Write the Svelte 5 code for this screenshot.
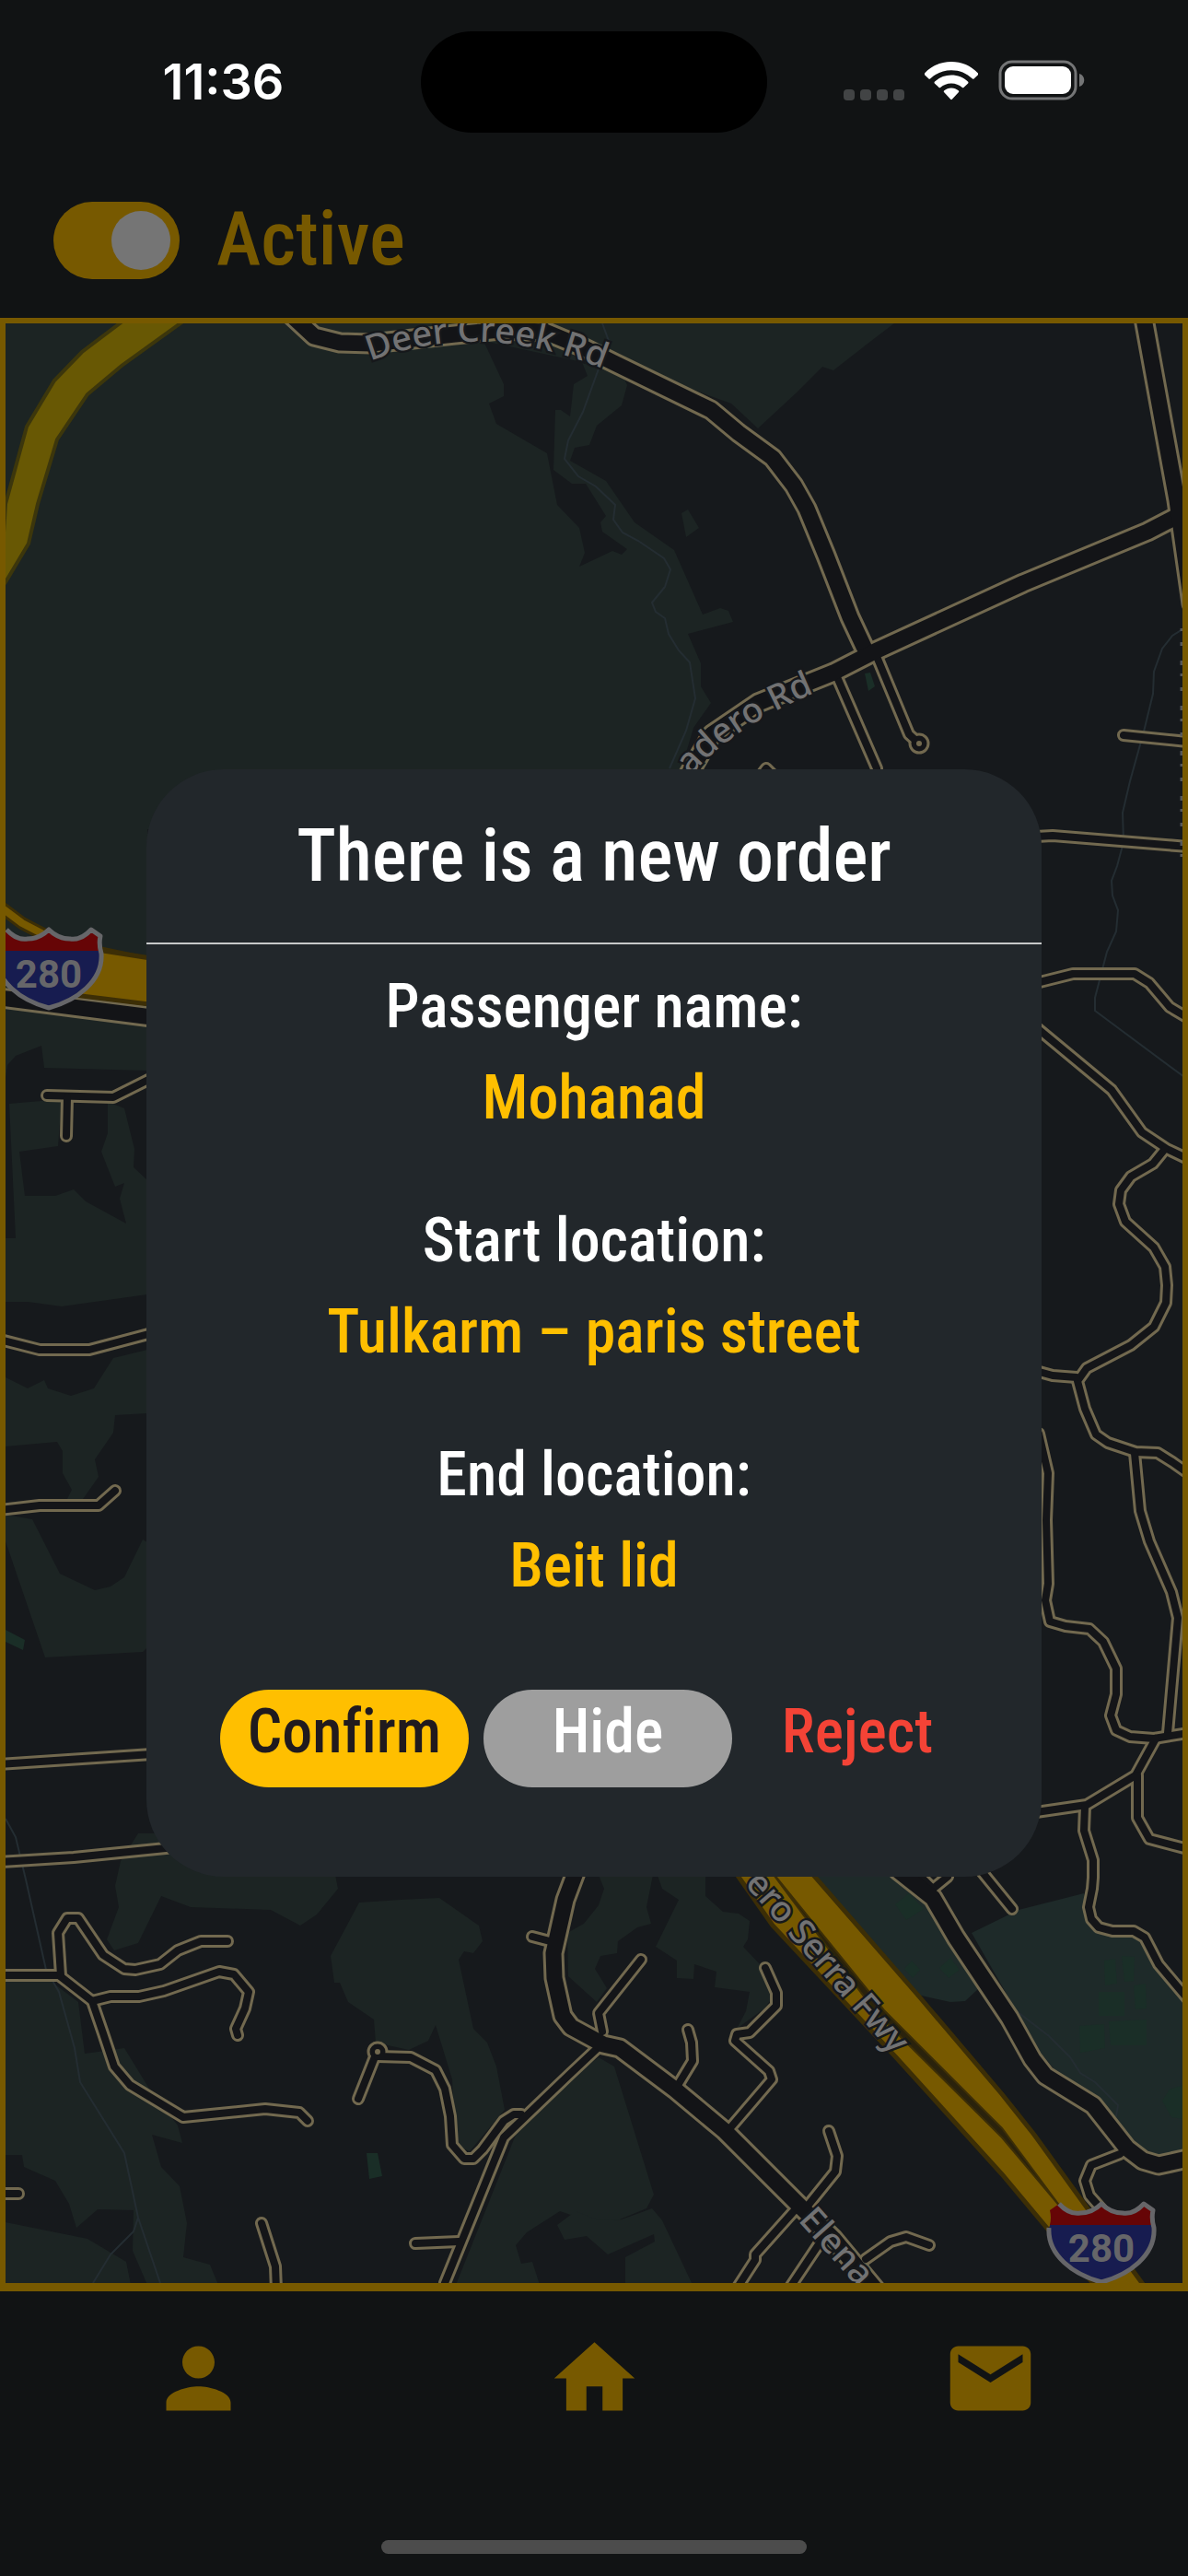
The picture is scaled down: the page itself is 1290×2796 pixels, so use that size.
<script>
  let active = $state(true);

  const details = [
    { label: 'Passenger name:', value: 'Mohanad' },
    { label: 'Start location:', value: 'Tulkarm – paris street' },
    { label: 'End location:', value: 'Beit lid' }
  ];

  const woods = [
    '6,351 971,351 946,370 905,402 893,398 864,427 823,465 794,438 670,393 681,418 675,440 648,462 640,483 624,486 619,500 658,522 689,567 732,597 763,667 782,660 791,663 796,675 747,688 761,720 761,745 772,763 753,790 740,834 740,900 160,900 160,1788 155,1793 49,1799 6,1673',
    '747,553 759,573 745,583 740,557',
    '131,2020 125,2047 129,2070 116,2105 124,2117 150,2109 175,2058 207,2070 294,2073 326,2090 344,2078 367,2050 363,2030 300,1990 150,1990',
    '390,2065 435,2062 477,2060 520,2090 524,2107 514,2120 504,2118 498,2127 514,2202 529,2217 539,2243 548,2290 510,2335 494,2328 491,2257 473,2198 465,2215 444,2225 408,2217 406,2192 378,2173 369,2152 363,2152 359,2123',
    '6,2151 56,2151 85,2173 92,2229 135,2223 162,2267 193,2307 198,2326 165,2317 175,2352 195,2373 203,2413 199,2450 228,2458 237,2480 160,2480 144,2443 145,2399 106,2398 83,2418 75,2392 60,2367 26,2352 24,2339 6,2339',
    '6,2412 95,2430 137,2455 142,2480 6,2480',
    '650,2233 667,2243 710,2382 702,2397 673,2409 646,2413 608,2400 572,2423 560,2437 566,2457 578,2455 586,2480 495,2480 560,2317 640,2240',
    '605,2415 613,2431 637,2427 660,2447 710,2425 711,2433 679,2450 679,2480 752,2480 719,2410 708,2397 675,2409 650,2410 625,2400',
    '648,2030 710,2030 702,2070 707,2088 692,2092 671,2107 670,2120 652,2123 646,2137 659,2158 648,2173 617,2145 616,2098 634,2088 650,2068 656,2050',
    '712,2030 719,2050 737,2062 712,2113 735,2128 735,2147 753,2148 754,2132 778,2140 776,2157 814,2162 810,2183 800,2202 830,2180 845,2160 826,2133 807,2113 812,2105 814,2085 802,2077 785,2075 766,2058 766,2030'
  ];

  const clearings = [
    '525,370 547,417 547,430 531,438 539,460 594,492 605,548 629,573 635,600 629,615 665,598 675,602 681,596 654,577 652,567 658,560 636,525 621,525 601,510 603,445 609,445 619,452 623,417 638,408 632,393',
    '8,1156 17,1146 45,1135 48,1159 160,1162 160,1281 145,1267 146,1247 135,1203 117,1196 117,1230 110,1250 125,1288 135,1284 130,1301 137,1328 93,1304 80,1291 60,1298 27,1298 21,1250 63,1244 67,1193 10,1198 17,1344 6,1344 6,1170',
    '6,1413 30,1413 67,1418 160,1405 160,1465 123,1474 102,1507 77,1515 52,1507 48,1498 30,1507 6,1495',
    '6,1570 62,1565 68,1575 68,1599 78,1617 72,1629 90,1627 107,1603 103,1584 123,1555 125,1536 160,1534 160,1674 155,1671 135,1712 120,1722 103,1726 65,1708 35,1649 6,1644'
  ];

  const parks = [
    '860,2010 960,2010 1005,2063 1063,2158 1048,2172 1032,2173 996,2165 951,2117',
    '1055,2098 1106,2073 1177,2055 1183,2087 1208,2098 1233,2098 1258,2140 1284,2173 1284,2333 1258,2340 1231,2327 1195,2278 1144,2245 1129,2227'
  ];

  const buildings = [
    '939,731 945,730 950,745 943,750',
    '6,1769 27,1780 25,1791 6,1782',
    '398,2337 410,2337 415,2362 401,2365',
    '987,2055 1003,2072 984,2084 972,2067',
    '990,2128 999,2138 991,2147 982,2137',
    '1032,2125 1042,2138 1030,2147 1020,2136',
    '1199,2128 1211,2126 1213,2153 1200,2155',
    '1218,2123 1232,2124 1231,2150 1221,2151',
    '1231,2155 1244,2153 1245,2180 1233,2181',
    '1193,2162 1221,2162 1221,2188 1193,2188',
    '1172,2199 1199,2197 1200,2223 1173,2228',
    '1204,2194 1245,2192 1245,2220 1206,2220',
    '1262,2280 1270,2268 1284,2263 1284,2300 1272,2298'
  ];

  const streams = [
    '654,351 661,370 633,447 617,478 613,498 628,517 647,528 668,548 666,564 676,578 693,587 721,606 728,618 722,637 708,654 712,664 722,671 726,688 737,706 749,719 755,758 745,793 727,834',
    '1284,683 1273,690 1262,704 1253,729 1252,753 1242,794 1227,848 1219,882 1220,914 1213,940 1207,956 1208,972 1214,988 1212,1011 1202,1033 1189,1083 1189,1097 1290,1172',
    '6,1974 17,1994 28,2040 50,2138 64,2162 81,2223 87,2260 135,2337 150,2407 174,2478',
    '150,2407 145,2422 120,2447 101,2478',
    '1104,2183 1139,2210 1162,2233 1173,2250 1189,2260 1214,2285 1212,2297'
  ];

  const streets = [
    '909,735 952,834',
    '953,715 987,797 998,807',
    '1220,798 1290,805',
    '1125,908 1143,907 1290,919',
    '1125,1067 1165,1057 1232,1057 1248,1067 1270,1093 1290,1105',
    '1125,1115 1207,1183 1240,1229 1267,1247 1290,1258',
    '1265,1247 1252,1263 1228,1277 1217,1292 1215,1307 1222,1326 1253,1354 1265,1375 1267,1395 1266,1414 1253,1440 1228,1460 1180,1485 1170,1499 1178,1529 1190,1557 1203,1566 1233,1576 1257,1577 1273,1587 1290,1599',
    '1125,1488 1143,1493 1169,1495',
    '1232,1577 1238,1640 1248,1673 1272,1728 1279,1756 1268,1881',
    '1128,1556 1138,1599 1136,1650 1138,1719 1135,1737 1140,1760 1157,1765 1183,1768 1198,1782 1212,1811 1212,1839 1206,1862 1212,1878 1227,1885 1253,1887 1290,1881',
    '1255,1887 1233,1927 1180,1959 1125,1967',
    '1235,1927 1235,1973 1248,1996 1290,2007',
    '1178,1961 1177,1987 1187,2019 1187,2038 1186,2050 1182,2070 1185,2083 1193,2092 1208,2096 1231,2096 1243,2103 1258,2132 1290,2170',
    '51,1189 123,1191 135,1185 165,1170',
    '73,1191 72,1233',
    '0,1454 43,1465 97,1465 165,1447',
    '0,1639 43,1634 107,1634 125,1618',
    '0,1915 165,1904',
    '0,2021 80,2016 200,2004',
    '0,2144 64,2144 100,2172 112,2207 124,2243 141,2263 199,2298 288,2289 325,2293 334,2302',
    '66,2144 63,2098 73,2082 85,2082 112,2122 135,2137 147,2138 174,2132 193,2117 218,2107 247,2107',
    '100,2172 120,2167 151,2167 178,2161 238,2140 254,2143 270,2162 266,2180 256,2202 258,2209',
    '408,2230 389,2278',
    '410,2232 446,2233 473,2247 483,2267 489,2297 491,2328 504,2343 514,2343 524,2333 547,2302 558,2295 566,2295',
    '0,2381 20,2381',
    '284,2413 299,2460 300,2486',
    '451,2435 498,2433',
    '578,2102 597,2107',
    '652,2220 618,2252 547,2320 483,2478',
    '654,2205 650,2185 696,2127',
    '735,2265 752,2237 751,2217 747,2203',
    '791,2312 838,2257 835,2248 798,2215 800,2208 814,2206 843,2177 843,2163 831,2136',
    '878,2393 907,2357 909,2340 900,2313',
    '862,2400 820,2447 820,2453 800,2484',
    '893,2430 857,2484',
    '940,2452 967,2433 984,2428 1009,2437',
    '1060,2024 1099,2072',
    '1029,2037 1013,2050',
    '1000,2037 1013,2050',
    '1216,2338 1185,2350 1178,2367 1183,2383 1198,2400',
    '826,842 832,834 840,842'
  ];

  const avenues = [
    '314,340 341,365 369,372 403,373 494,363 543,358 592,360 633,377 665,393 772,445 802,470 839,497 862,527 876,552 897,603 923,670 938,702',
    '1290,550 1275,562 1246,577 1111,633 950,707 905,730 823,763 773,797 745,845',
    '1241,340 1278,543 1294,655',
    '0,1083 165,1104',
    '626,2030 614,2062 601,2120 602,2147 611,2188 620,2200 655,2219 673,2223 733,2268 787,2313 866,2392 905,2430 950,2484',
    '975,2030 1013,2060 1038,2103 1096,2190 1121,2235 1135,2253 1187,2285 1224,2332 1241,2345 1258,2350 1290,2343'
  ];

  const circles = [[410, 2227], [998, 807]];
  const shields = [[53, 1007], [1196, 2390]];
</script>

<div class="phone">
  <div class="status">
    <span class="time">11:36</span>
    <span class="island"></span>
    <div class="indicators">
      <svg class="cell" viewBox="0 0 66 12" aria-hidden="true">
        <rect x="0" width="12" height="12" rx="4" /><rect x="18" width="12" height="12" rx="4" />
        <rect x="36" width="12" height="12" rx="4" /><rect x="54" width="12" height="12" rx="4" />
      </svg>
      <svg class="wifi" viewBox="0 0 58 42" aria-hidden="true">
        <path d="M29 0C18 0 8 4 0 12.500q-.5 1 0 1.700l4.500 4.400q.8.500 1.500 0C12.500 12.500 20 9.300 29 9.300s16.500 3.200 23 9.300q.8.500 1.500 0l4.500-4.400q.5-.8 0-1.700C50 4 40 0 29 0z" />
        <path d="M29 14.500c-7 0-13 2.500-18.200 7.200q-.6.900 0 1.700l4.800 4.600q.8.500 1.500 0c3.500-3 7.300-4.600 11.900-4.600s8.400 1.600 11.900 4.600q.8.500 1.500 0l4.800-4.600q.6-.9 0-1.700C42 17 36 14.500 29 14.500z" />
        <path d="M29 28.500c-3 0-5.500 1-8 3q-.6.800 0 1.600l7.200 7.700q.8.700 1.600 0l7.200-7.700q.6-.8 0-1.600c-2.500-2-5-3-8-3z" />
      </svg>
      <svg class="battery" viewBox="0 0 94 44" aria-hidden="true">
        <rect class="shell" x="2" y="2" width="82" height="40" rx="13" />
        <rect class="charge" x="7" y="7" width="72" height="30" rx="9" />
        <path class="nub" d="M88 15c7 2 7 12 0 14z" />
      </svg>
    </div>
  </div>

  <header>
    <label class="switch">
      <input type="checkbox" role="switch" bind:checked={active} />
      <span>Active</span>
    </label>
  </header>

  <main>
    <svg class="map" viewBox="6 351 1278 2127" preserveAspectRatio="xMidYMid slice" role="img" aria-label="Map">
      <defs>
        <path id="deer" d="M402 392Q535 340 690 416" />
        <path id="arastradero" d="M750 842Q800 784 900 746" />
      </defs>
      <rect class="ground" x="6" y="351" width="1278" height="2127" />
      {#each woods as points}<polygon class="wood" {points} />{/each}
      {#each clearings as points}<polygon class="ground" {points} />{/each}
      {#each parks as points}<polygon class="park" {points} />{/each}
      {#each buildings as points}<polygon class="building" {points} />{/each}
      {#each streams as points}<polyline class="stream" {points} />{/each}

      {#each streets as points}<polyline class="street edge" {points} />{/each}
      {#each avenues as points}<polyline class="avenue edge" {points} />{/each}
      {#each circles as [cx, cy]}<circle class="rim" {cx} {cy} r="10" />{/each}
      {#each streets as points}<polyline class="street" {points} />{/each}
      {#each avenues as points}<polyline class="avenue" {points} />{/each}
      {#each circles as [cx, cy]}<circle class="island-dot" {cx} {cy} r="3" />{/each}

      <polygon class="parkway" points="134,348 89,382 59,413 29,463 6,547 0,640 6,632 31,590 41,547 62,477 95,428 132,397 200,348" />
      <polyline class="ramp edge" points="0,984 24,1002 70,1026 165,1046" />
      <polyline class="ramp" points="0,984 24,1002 70,1026 165,1046" />
      <polygon class="freeway" points="56,1026 112,1032 170,1041 170,1091 80,1080" />
      <polygon class="freeway" points="790,2020 839,2090 972,2232 1088,2360 1190,2482 1243,2482 1183,2400 1123,2317 1088,2273 998,2167 870,2020" />
      <path class="median" d="M832 2024L960 2182 1088 2310 1152 2396 1088 2320 950 2183z" />

      <text class="road-name"><textPath href="#deer">Deer Creek Rd</textPath></text>
      <text class="road-name"><textPath href="#arastradero">adero Rd</textPath></text>
      <text class="road-name" text-anchor="end" transform="translate(970 2231) rotate(49)">ero Serra Fwy</text>
      <text class="road-name" transform="translate(866 2410) rotate(48)">Elena</text>
      <path class="side-name" d="M1284 682V934" />

      {#each shields as [x, y]}
        <g transform="translate({x} {y})">
          <path class="shield-blue" d="M-46 2Q-35 14-23 12-10 12 0 2 10 12 23 12 35 14 46 2L56 9Q54 18 57 28C59 58 30 79 0 87-30 79-59 58-57 28-54 18-56 9z" />
          <path class="shield-red" d="M-46 2Q-35 14-23 12-10 12 0 2 10 12 23 12 35 14 46 2L56 9Q54 17 56 25H-56Q-54 17-56 9z" />
          <path class="shield-line" d="M-46 2Q-35 14-23 12-10 12 0 2 10 12 23 12 35 14 46 2L56 9Q54 18 57 28C59 58 30 79 0 87-30 79-59 58-57 28-54 18-56 9zM-56 26H56" />
          <text class="route" text-anchor="middle" y="65">280</text>
        </g>
      {/each}
    </svg>
  </main>

  <nav>
    <button type="button" aria-label="Profile">
      <svg viewBox="0 0 24 24"><path d="M12 12c2.210 0 4-1.790 4-4s-1.790-4-4-4-4 1.790-4 4 1.790 4 4 4zm0 2c-2.670 0-8 1.340-8 4v2h16v-2c0-2.660-5.330-4-8-4z" /></svg>
    </button>
    <button type="button" aria-label="Home">
      <svg viewBox="0 0 24 24"><path d="M10 20v-6h4v6h5v-8h3L12 3 2 12h3v8z" /></svg>
    </button>
    <button type="button" aria-label="Messages">
      <svg viewBox="0 0 24 24"><path d="M20 4H4c-1.100 0-1.990.9-1.990 2L2 18c0 1.100.9 2 2 2h16c1.100 0 2-.9 2-2V6c0-1.100-.9-2-2-2zm0 4l-8 5-8-5V6l8 5 8-5v2z" /></svg>
    </button>
  </nav>
  <div class="home-bar"></div>

  <div class="overlay">
    <div class="dialog" role="dialog" aria-modal="true" aria-labelledby="order-title">
      <h1 id="order-title">There is a new order</h1>
      <dl>
        {#each details as item}
          <div class="detail">
            <dt>{item.label}</dt>
            <dd>{item.value}</dd>
          </div>
        {/each}
      </dl>
      <div class="actions">
        <button type="button" class="confirm">Confirm</button>
        <button type="button" class="hide">Hide</button>
        <button type="button" class="reject">Reject</button>
      </div>
    </div>
  </div>
</div>

<style>
  :global(body) { margin: 0; background: #111314; }
  .phone {
    position: relative;
    display: flex;
    flex-direction: column;
    min-height: 100vh;
    background: #111314;
    color: #fff;
    font-family: 'Roboto Condensed', Roboto, 'Liberation Sans', sans-serif;
    font-weight: 500;
    font-variant-ligatures: none;
  }

  .status {
    display: grid;
    grid-template-columns: 1fr 376px 1fr;
    align-items: center;
    height: 177px;
  }
  .time {
    padding-left: 28px;
    text-align: center;
    font: 600 54px/64px Inter, 'Liberation Sans', sans-serif;
  }
  .island { height: 110px; border-radius: 55px; background: #000; }
  .indicators {
    display: flex;
    align-items: flex-end;
    justify-content: flex-end;
    padding: 0 112px 4px 0;
  }
  .cell { width: 66px; height: 12px; margin-right: 22px; fill: #424445; }
  .wifi { width: 58px; height: 42px; margin-right: 22px; fill: #fff; }
  .battery { width: 94px; height: 44px; }
  .shell { fill: none; stroke: #747576; stroke-width: 3; }
  .charge { fill: #fff; }
  .nub { fill: #747576; }

  header { height: 168px; display: flex; align-items: center; padding: 0 58px; }
  .switch {
    display: flex;
    align-items: center;
    gap: 40px;
    color: #775900;
    font-size: 82px;
    line-height: 84px;
  }
  .switch span { padding-bottom: 4px; }
  .switch input {
    appearance: none;
    display: flex;
    align-items: center;
    width: 137px;
    height: 84px;
    margin: 0;
    padding: 0 10px;
    box-sizing: border-box;
    border-radius: 42px;
    background: #3a3c3d;
  }
  .switch input::before {
    content: '';
    width: 64px;
    height: 64px;
    border-radius: 50%;
    background: #757575;
  }
  .switch input:checked { justify-content: flex-end; background: #775900; }

  main {
    position: relative;
    flex: 1;
    display: flex;
    min-height: 0;
    border: 6px solid #775900;
    border-bottom-width: 9px;
  }
  .map { flex: 1; min-width: 0; width: 100%; }
  .ground { fill: #16191c; }
  .wood { fill: #1c2423; }
  .park { fill: #1e2a29; }
  .building { fill: #1a2e27; }
  .stream { fill: none; stroke: #242d32; stroke-width: 2; }
  .street, .avenue, .ramp { fill: none; stroke-linejoin: round; stroke-linecap: round; }
  .street { stroke: #141518; stroke-width: 8; }
  .street.edge { stroke: #72694f; stroke-width: 14; }
  .avenue { stroke: #131417; stroke-width: 17; }
  .avenue.edge { stroke: #72694f; stroke-width: 23; }
  .rim { fill: #141518; stroke: #72694f; stroke-width: 3; }
  .island-dot { fill: #72694f; }
  .parkway { fill: #685804; stroke: #3c360c; stroke-width: 4; }
  .ramp { stroke: #775900; stroke-width: 8; }
  .ramp.edge { stroke: #3c2e06; stroke-width: 14; }
  .freeway { fill: #775900; stroke: #3c2e06; stroke-width: 5; }
  .median { fill: #2a220c; stroke: #3c2e06; stroke-width: 2; }
  .road-name {
    fill: #727273;
    stroke: #16181b;
    stroke-width: 5;
    paint-order: stroke;
    font: 500 38px 'Noto Sans', 'Open Sans', sans-serif;
  }
  .side-name { fill: none; stroke: #55575a; stroke-width: 5; stroke-dasharray: 3 12 4 16 5 9; }
  .shield-blue { fill: #171c50; }
  .shield-red { fill: #660506; }
  .shield-line { fill: none; stroke: #666669; stroke-width: 5; stroke-linejoin: round; }
  .route { fill: #666669; font: 700 42px 'Roboto', sans-serif; }

  nav { display: flex; height: 188px; }
  nav button {
    flex: 1;
    display: flex;
    justify-content: center;
    align-items: center;
    padding: 0;
    border: 0;
    background: none;
  }
  nav svg { width: 105px; height: 105px; fill: #775900; }
  .home-bar {
    width: 462px;
    height: 15px;
    margin: 82px auto 24px;
    border-radius: 8px;
    background: #4c4c4c;
  }

  .overlay {
    position: absolute;
    inset: 0;
    display: flex;
    align-items: center;
    justify-content: center;
    padding: 177px 159px 102px;
  }
  .dialog {
    flex: 1;
    min-width: 0;
    padding-bottom: 97px;
    border-radius: 84px;
    background: #22272b;
  }
  h1 {
    margin: 0;
    padding: 43px 24px;
    border-bottom: 2px solid #c8c9ca;
    font-size: 80px;
    font-weight: 500;
    line-height: 102px;
    text-align: center;
  }
  dl {
    display: flex;
    flex-direction: column;
    gap: 56px;
    margin: 0;
    padding: 18px 24px 0;
    font-size: 66px;
    line-height: 99px;
    text-align: center;
  }
  dd { margin: 0; color: #ffbf00; }
  .actions {
    display: flex;
    gap: 16px;
    margin-top: 85px;
    padding: 0 80px;
  }
  .actions button {
    width: 270px;
    height: 106px;
    padding: 0 0 14px;
    border: 0;
    border-radius: 53px;
    background: none;
    font: inherit;
    font-size: 66px;
    line-height: 92px;
  }
  .actions .confirm { background: #ffbf00; color: #201a1e; }
  .actions .hide { background: #9e9e9e; color: #fff; }
  .actions .reject { width: auto; flex: 1; color: #f44336; }
</style>
